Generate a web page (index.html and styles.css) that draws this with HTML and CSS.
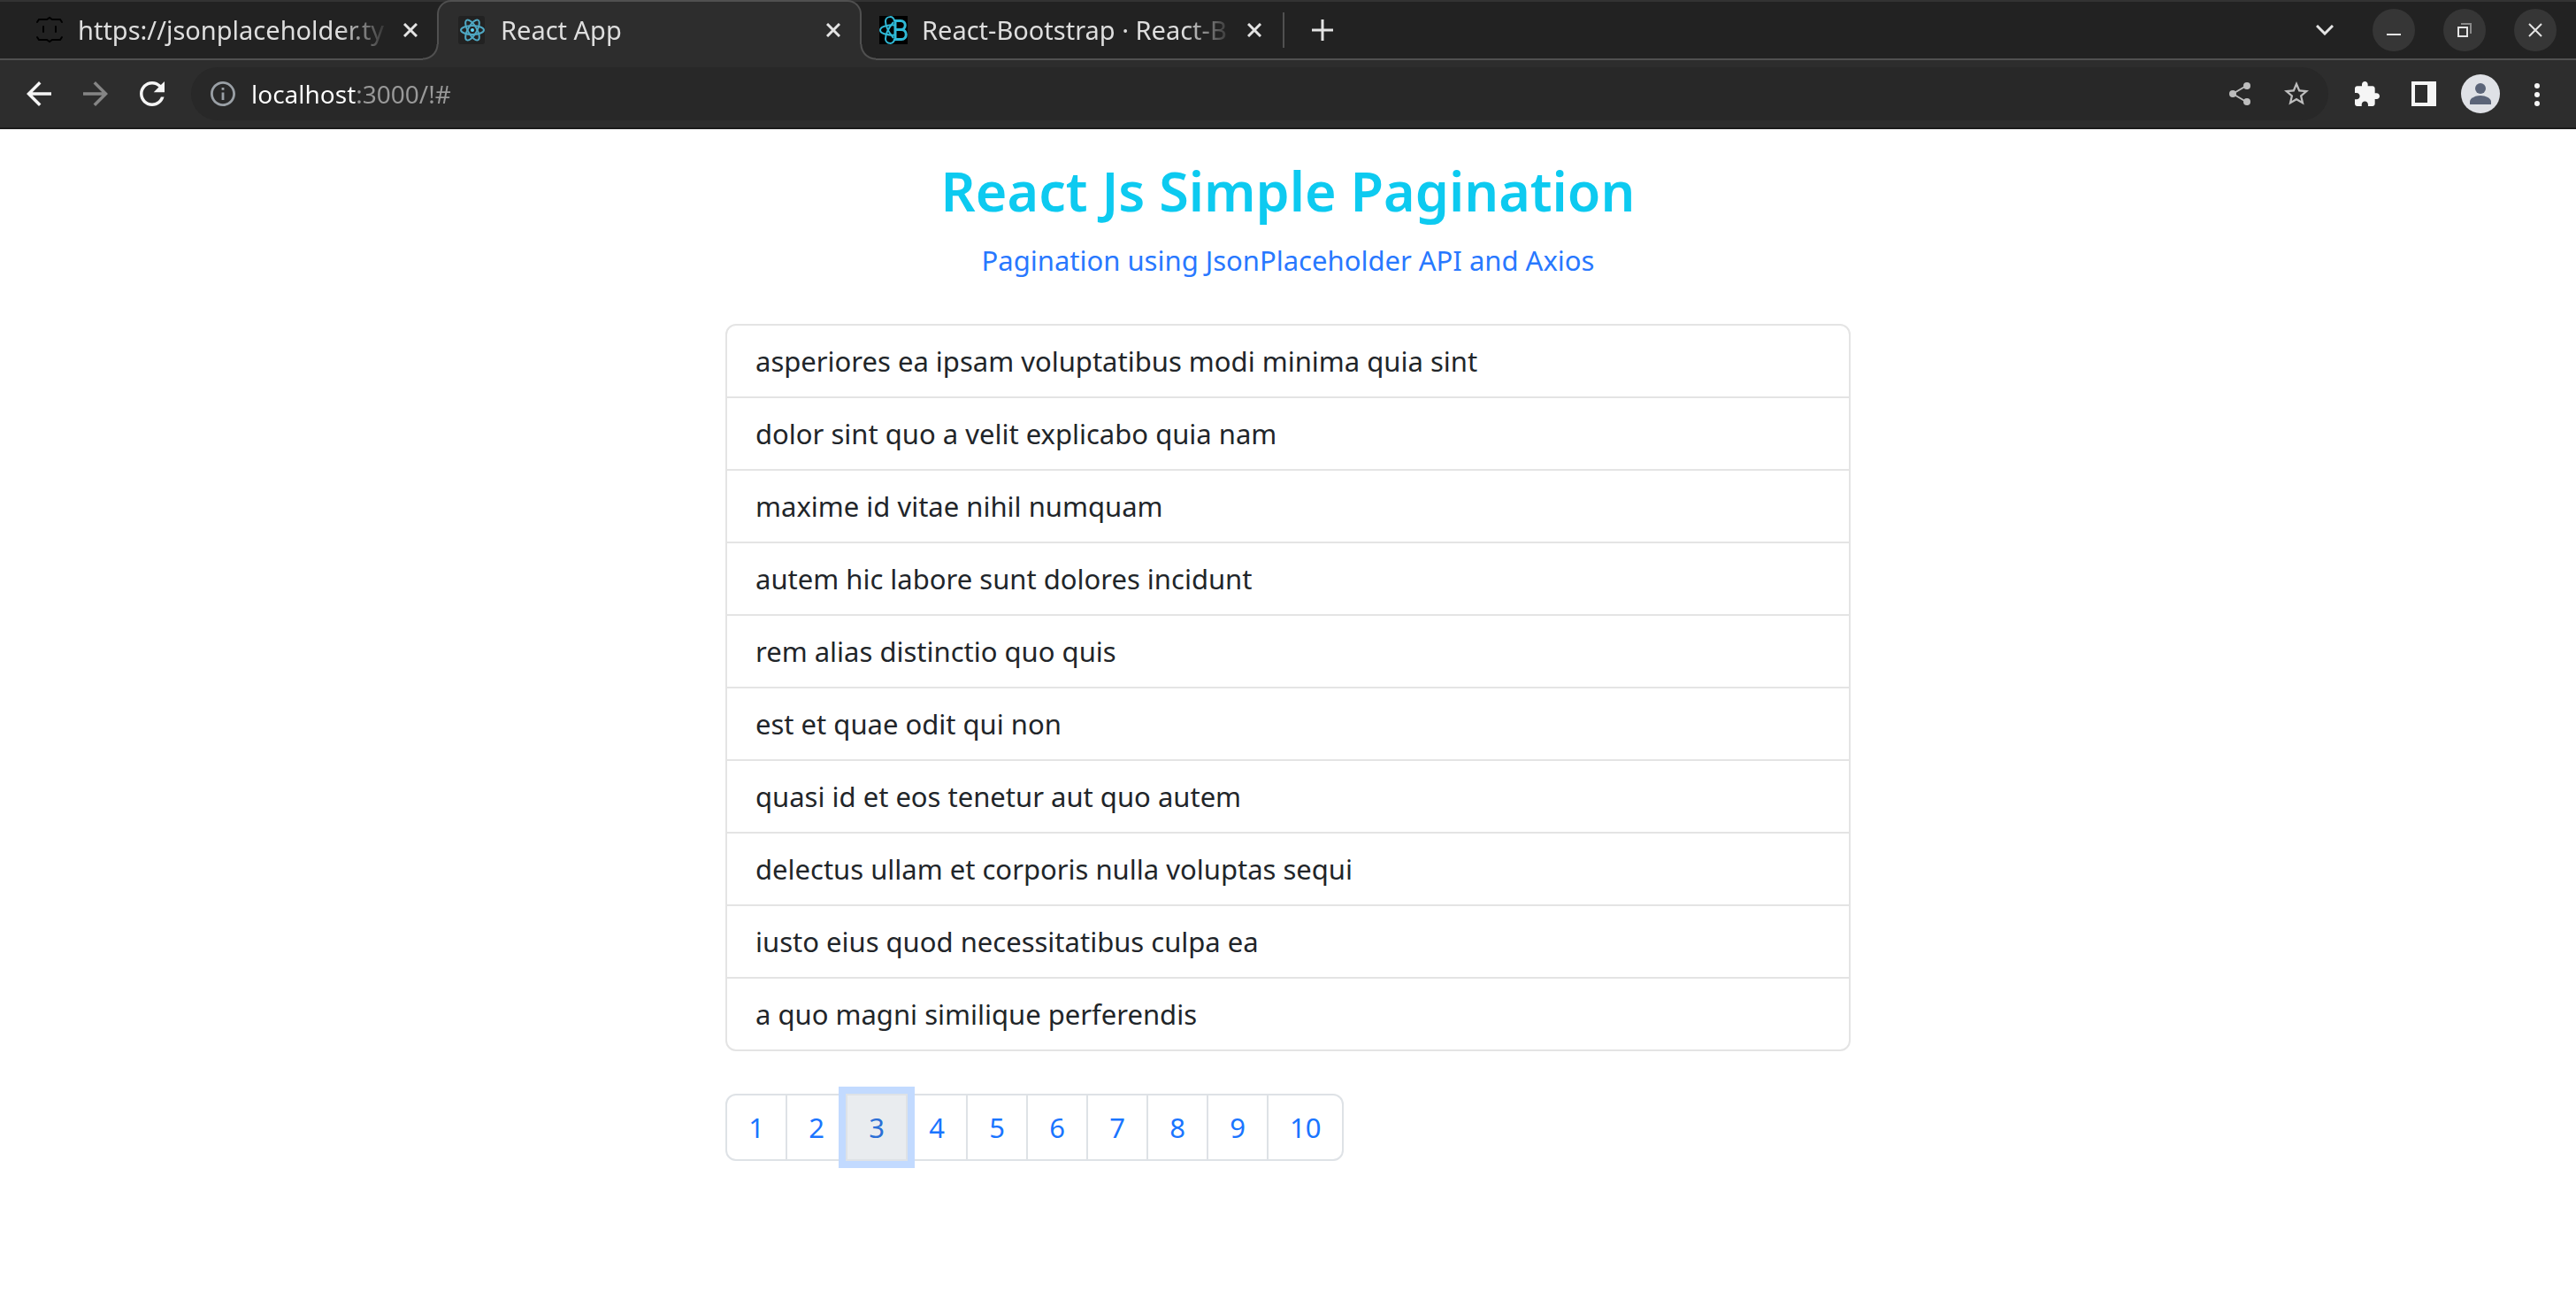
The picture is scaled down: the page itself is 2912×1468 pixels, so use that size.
FILE: index.html
```html
<!DOCTYPE html>
<html lang="en">
<head>
<meta charset="utf-8">
<title>React App</title>
<link rel="stylesheet" href="styles.css">
</head>
<body>
<header class="browser">
  <div class="tabstrip">
    <div class="tab tab-first">
      <svg class="favicon" viewBox="0 0 32 32" fill="none" stroke="#000" stroke-width="2" stroke-linecap="round">
        <path d="M2 7l2-3h9l3-2 3 2h9l2 3M2 24l2 3h9l3 2 3-2h9l2-3M9 12v6M23 12v6"/>
      </svg>
      <span class="tab-title">https://jsonplaceholder.ty</span>
      <button class="tab-close" aria-label="Close tab"><svg viewBox="0 0 16 16"><path d="M1 1l14 14M15 1L1 15"/></svg></button>
    </div>
    <div class="tab tab-active">
      <svg class="favicon" viewBox="0 0 32 32" fill="none" stroke="#4fa9c4" stroke-width="2">
        <rect width="30" height="32" rx="3" fill="#222" stroke="none"/>
        <ellipse cx="16" cy="16" rx="13" ry="5"/>
        <ellipse cx="16" cy="16" rx="13" ry="5" transform="rotate(60 16 16)"/>
        <ellipse cx="16" cy="16" rx="13" ry="5" transform="rotate(120 16 16)"/>
        <circle cx="16" cy="16" r="2" fill="#61dafb" stroke="none"/>
      </svg>
      <span class="tab-title">React App</span>
      <button class="tab-close" aria-label="Close tab"><svg viewBox="0 0 16 16"><path d="M1 1l14 14M15 1L1 15"/></svg></button>
    </div>
    <div class="tab tab-last">
      <svg class="favicon" viewBox="0 0 32 32" fill="none" stroke="#2fb9d6" stroke-width="2">
        <rect width="32" height="32" fill="#000" stroke="none"/>
        <path d="M17 10.500C13 10 1 11 1 16s12 6 16 5.500"/>
        <path d="M17 6C17 -1 7 0 7 6c0 6 4 13 9 19M17 26c0 7-10 6-10 0 0-6 4-13 9-19"/>
        <path stroke-width="3" d="M18 5.500h6c7 0 7 10 0 10h-6zM18 15.500h7c7 0 7 11 0 11h-7z"/>
      </svg>
      <span class="tab-title">React-Bootstrap · React-B</span>
      <button class="tab-close" aria-label="Close tab"><svg viewBox="0 0 16 16"><path d="M1 1l14 14M15 1L1 15"/></svg></button>
    </div>
    <button class="new-tab" aria-label="New tab"><svg viewBox="0 0 24 24"><path d="M12 0v24M0 12h24"/></svg></button>
    <div class="window-controls">
      <button class="tab-search" aria-label="Search tabs"><svg viewBox="0 0 20 12"><path d="M1 1l9 9 9-9"/></svg></button>
      <button class="window-button" aria-label="Minimize"><svg viewBox="0 0 16 16"><path d="M0 13h16"/></svg></button>
      <button class="window-button" aria-label="Restore"><svg viewBox="0 0 16 16"><path d="M1 5h10v10H1z"/><path d="M4 1h11v11" stroke="#8a8a8a"/></svg></button>
      <button class="window-button" aria-label="Close"><svg viewBox="0 0 16 16"><path d="M1 1l14 14M15 1L1 15"/></svg></button>
    </div>
  </div>
  <div class="toolbar">
    <div class="nav">
      <button class="icon-button" aria-label="Back"><svg viewBox="4 4 16 16"><path d="M20 11H7.830l5.590-5.590L12 4l-8 8 8 8 1.410-1.410L7.830 13H20z"/></svg></button>
      <button class="icon-button disabled" aria-label="Forward"><svg viewBox="4 4 16 16"><path d="M12 4l-1.410 1.410L16.170 11H4v2h12.170l-5.580 5.590L12 20l8-8z"/></svg></button>
      <button class="icon-button" aria-label="Reload"><svg viewBox="4 4 16 16"><path d="M17.650 6.350C16.200 4.900 14.210 4 12 4c-4.420 0-7.990 3.580-7.990 8s3.570 8 7.990 8c3.730 0 6.840-2.550 7.730-6h-2.080c-.820 2.330-3.040 4-5.650 4-3.310 0-6-2.690-6-6s2.690-6 6-6c1.660 0 3.140.690 4.220 1.780L13 11h7V4z"/></svg></button>
    </div>
    <div class="omnibox">
      <svg class="info" viewBox="2 2 20 20"><path d="M11 7h2v2h-2zm0 4h2v6h-2zm1-9C6.480 2 2 6.480 2 12s4.480 10 10 10 10-4.480 10-10S17.520 2 12 2zm0 18c-4.410 0-8-3.590-8-8s3.590-8 8-8 8 3.590 8 8-3.590 8-8 8z"/></svg>
      <input class="address" type="text" value="localhost:3000/!#" aria-label="Address">
      <button class="icon-button muted" aria-label="Share"><svg viewBox="0 0 28 28"><path d="M6 14L22 4.500M6 14l16 9.500" stroke="#bdbdbd" stroke-width="2"/><circle cx="6" cy="14" r="4"/><circle cx="22" cy="5" r="4"/><circle cx="22" cy="23" r="4"/></svg></button>
      <button class="icon-button muted" aria-label="Bookmark"><svg viewBox="2 2 20 20"><path d="M22 9.240l-7.190-.620L12 2 9.190 8.630 2 9.240l5.460 4.730L5.820 21 12 17.270 18.180 21l-1.630-7.030zM12 15.400l-3.760 2.270 1-4.280-3.320-2.880 4.380-.380L12 6.100l1.710 4.040 4.380.380-3.320 2.880 1 4.280z"/></svg></button>
    </div>
    <div class="actions">
      <button class="icon-button" aria-label="Extensions"><svg viewBox="2 1 21 21"><path d="M20.500 11H19V7c0-1.100-.900-2-2-2h-4V3.500C13 2.120 11.880 1 10.500 1S8 2.120 8 3.500V5H4c-1.100 0-2 .900-2 2v3.800h1.500c1.490 0 2.700 1.210 2.700 2.700s-1.210 2.700-2.700 2.700H2V20c0 1.100.900 2 2 2h3.800v-1.500c0-1.490 1.210-2.700 2.700-2.700s2.700 1.210 2.700 2.700V22H17c1.100 0 2-.900 2-2v-4h1.500c1.380 0 2.500-1.120 2.500-2.500S21.880 11 20.500 11z"/></svg></button>
      <button class="icon-button" aria-label="Side panel"><svg viewBox="0 0 28 28"><path fill-rule="evenodd" d="M0 0h28v28H0zM4 4v20h14V4z"/></svg></button>
      <button class="icon-button avatar" aria-label="Profile"><svg viewBox="0 0 44 44"><circle cx="22" cy="22" r="22" fill="#dfe1e6"/><circle cx="22" cy="16" r="6" fill="#5b6478"/><path d="M10 34v-3c0-4 6-7 12-7s12 3 12 7v3z" fill="#5b6478"/></svg></button>
      <button class="icon-button" aria-label="Menu"><svg viewBox="0 0 28 28"><circle cx="14" cy="5" r="3"/><circle cx="14" cy="15" r="3"/><circle cx="14" cy="25" r="3"/></svg></button>
    </div>
  </div>
</header>
<main class="container">
  <h1 class="title">React Js Simple Pagination</h1>
  <p class="subtitle">Pagination using JsonPlaceholder API and Axios</p>
  <ul class="list">
    <li>asperiores ea ipsam voluptatibus modi minima quia sint</li>
    <li>dolor sint quo a velit explicabo quia nam</li>
    <li>maxime id vitae nihil numquam</li>
    <li>autem hic labore sunt dolores incidunt</li>
    <li>rem alias distinctio quo quis</li>
    <li>est et quae odit qui non</li>
    <li>quasi id et eos tenetur aut quo autem</li>
    <li>delectus ullam et corporis nulla voluptas sequi</li>
    <li>iusto eius quod necessitatibus culpa ea</li>
    <li>a quo magni similique perferendis</li>
  </ul>
  <nav class="pagination" aria-label="Pages">
    <a href="#">1</a>
    <a href="#">2</a>
    <a href="#" class="current" aria-current="page">3</a>
    <a href="#">4</a>
    <a href="#">5</a>
    <a href="#">6</a>
    <a href="#">7</a>
    <a href="#">8</a>
    <a href="#">9</a>
    <a href="#">10</a>
  </nav>
</main>
</body>
</html>
```
FILE: styles.css
```css
* { box-sizing: border-box; }

body {
  margin: 0;
  background: #fff;
  color: #212529;
  font-family: "Noto Sans", "Open Sans", sans-serif;
  font-size: 31px;
  line-height: 48px;
}

button {
  display: flex;
  align-items: center;
  justify-content: center;
  flex: none;
  padding: 0;
  border: 0;
  background: none;
}

svg { display: block; flex: none; }

/* Browser frame */
.browser { background: #2d2d2d; border-bottom: 2px solid #1c1c1c; }

.tabstrip {
  display: flex;
  height: 68px;
  background: #222;
  box-shadow: inset 0 2px #333, inset 0 -2px #505050;
}

.tab {
  display: flex;
  align-items: center;
  gap: 16px;
  flex: 0 1 476px;
  min-width: 0;
  padding: 0 16px 0 20px;
  color: #dedede;
  font-size: 29px;
}

.tab-first { flex-basis: 494px; padding: 0 14px 0 40px; }

.tab-active {
  position: relative;
  flex-basis: 480px;
  background: #2d2d2d;
  border: 2px solid #505050;
  border-bottom: 0;
  border-radius: 16px 16px 0 0;
  padding: 0 14px 2px 22px;
}

.tab-active::before,
.tab-active::after {
  content: "";
  position: absolute;
  bottom: 0;
  width: 18px;
  height: 18px;
}

.tab-active::before {
  left: -18px;
  background: radial-gradient(circle at 0 0, #222 15px, #505050 16px, #505050 17px, #2d2d2d 18px);
}

.tab-active::after {
  right: -18px;
  background: radial-gradient(circle at 100% 0, #222 15px, #505050 16px, #505050 17px, #2d2d2d 18px);
}

.favicon { width: 32px; height: 32px; }

.tab-title {
  flex: 1;
  min-width: 0;
  overflow: hidden;
  white-space: nowrap;
  -webkit-mask-image: linear-gradient(to left, transparent, #000 56px);
  mask-image: linear-gradient(to left, transparent, #000 56px);
}

.tab-close { width: 32px; height: 32px; margin-left: -8px; }

.tabstrip button svg { fill: none; stroke: #e4e4e4; stroke-width: 3; }
.tab-close svg { width: 16px; height: 16px; }

.new-tab {
  width: 90px;
  background: linear-gradient(#505050, #505050) left center / 2px 40px no-repeat;
}
.new-tab svg { width: 24px; height: 24px; }

.window-controls {
  display: flex;
  align-items: center;
  gap: 32px;
  margin-left: auto;
  padding-right: 22px;
}

.tab-search { width: 48px; height: 48px; margin-right: -2px; }
.tab-search svg { width: 20px; height: 12px; }

.window-button {
  width: 48px;
  height: 48px;
  border-radius: 50%;
  background: #363636;
}
.window-button svg { width: 16px; height: 16px; }
.window-controls .window-button svg { stroke-width: 2; }

.toolbar {
  display: flex;
  align-items: center;
  gap: 30px;
  height: 76px;
  padding: 0 30px;
}

.nav { display: flex; gap: 36px; }
.actions { display: flex; align-items: center; gap: 36px; }

.icon-button svg { width: 28px; height: 28px; fill: #f5f5f5; }
.icon-button.disabled svg { fill: #858585; }
.icon-button.muted svg { fill: #bdbdbd; }
.icon-button.avatar { margin: 0 -8px; }
.icon-button.avatar svg { width: 44px; height: 44px; }

.omnibox {
  display: flex;
  align-items: center;
  gap: 36px;
  flex: 1;
  min-width: 0;
  height: 60px;
  padding: 0 22px;
  border-radius: 30px;
  background: #282828;
}

.info { width: 28px; height: 28px; fill: #9aa0a6; margin-right: -18px; }

.address {
  flex: 1;
  min-width: 0;
  padding: 0;
  border: 0;
  outline: 0;
  background: linear-gradient(90deg, #fff 118px, #999 118px);
  -webkit-background-clip: text;
  background-clip: text;
  color: transparent;
  font-family: inherit;
  font-size: 28px;
  line-height: 48px;
}

/* Page */
.container {
  max-width: 1320px;
  margin: 0 auto;
  padding: 32px 24px;
}

.title {
  margin: 0 0 16px;
  color: #0dcaf0;
  font-size: 61px;
  font-weight: 600;
  line-height: 76px;
  text-align: center;
}

.subtitle {
  margin: 0 0 48px;
  color: #2878ff;
  text-align: center;
}

.list {
  margin: 0 0 48px;
  padding: 0;
  border: 2px solid #e4e4e4;
  border-radius: 12px;
  list-style: none;
}

.list li { padding: 16px 32px; }
.list li + li { border-top: 2px solid #e4e4e4; }

.pagination { display: flex; }

.pagination a {
  min-width: 70px;
  padding: 12px 24px;
  border: 2px solid #dee2e6;
  color: #1a75ff;
  text-align: center;
  text-decoration: none;
}

.pagination a + a { margin-left: -2px; }
.pagination a:first-child { border-radius: 12px 0 0 12px; }
.pagination a:last-child { border-radius: 0 12px 12px 0; }

.pagination .current {
  position: relative;
  z-index: 1;
  background: #e9ecef;
  color: #2b6fd6;
  box-shadow: 0 0 0 8px #c2daff;
}
```
